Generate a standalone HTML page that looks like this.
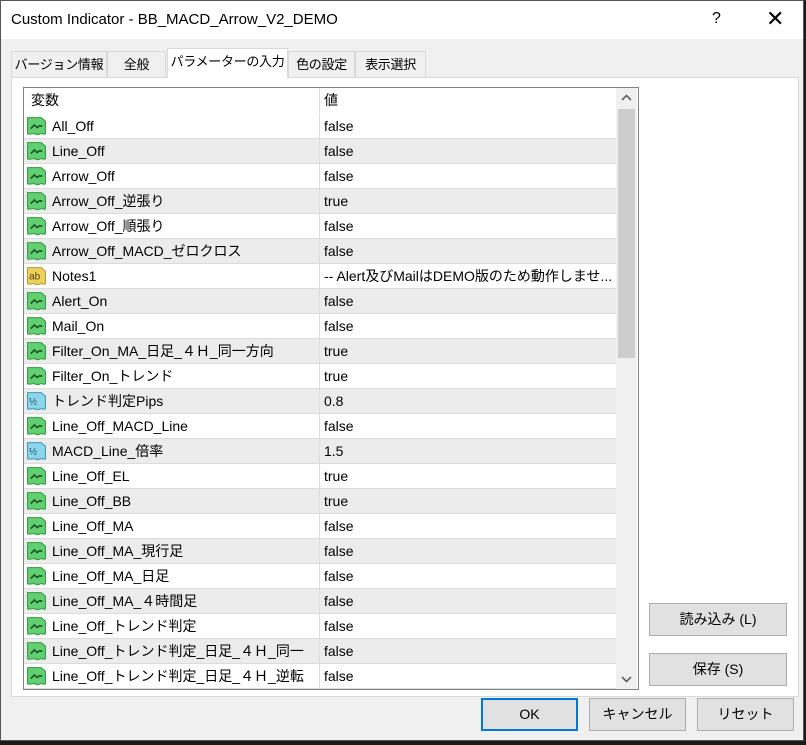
<!DOCTYPE html>
<html><head><meta charset="utf-8"><style>
*{box-sizing:border-box;margin:0;padding:0}
body{width:806px;height:745px;background:#1a1a1a;position:relative;overflow:hidden;font-family:"Liberation Sans","Noto Sans CJK JP",sans-serif;font-size:14px;color:#000}
.win{position:absolute;left:0;top:0;width:804px;height:741px;background:#f0f0f0;border:1px solid #555}
.title{position:absolute;left:0;top:0;width:802px;height:38px;background:#fff}
.title .t{position:absolute;left:10px;top:10px;font-size:15px}
.title .q{position:absolute;left:711px;top:9px;font-size:16px}
.title .x{position:absolute;left:765px;top:5px;font-size:22px;font-weight:300}
.tab{position:absolute;top:50px;height:27px;border:1px solid #d9d9d9;border-bottom:none;background:#f0f0f0;text-align:center;line-height:25px;font-size:13px;white-space:nowrap;overflow:hidden;letter-spacing:-0.3px}
.tab.a{top:47px;height:30px;background:#fff;z-index:2}
.panel{position:absolute;left:10px;top:76px;width:788px;height:620px;background:#fff;border:1px solid #d9d9d9}
.list{position:absolute;left:22px;top:86px;width:616px;height:603px;border:1px solid #828282;background:#fff;overflow:hidden}
.row{position:absolute;left:0;width:592px;height:25px;border-bottom:1px solid #dcdcdc;line-height:24px}
.row.g{background:#ececec}
.row .n{position:absolute;left:28px;white-space:nowrap}
.row .v{position:absolute;left:300px;white-space:nowrap}
.row .d{position:absolute;left:295px;top:0;width:1px;height:25px;background:#dcdcdc}
.ic{position:absolute;left:2px;top:2px;width:21px;height:20px}
.sb{position:absolute;left:592px;top:0;width:21px;height:601px;background:#f0f0f0}
.th{position:absolute;left:2px;top:21px;width:17px;height:249px;background:#cdcdcd}
.btn{position:absolute;height:33px;background:#e1e1e1;border:1px solid #adadad;text-align:center;line-height:31px;font-size:14px}
</style></head><body>
<div class="win">
<div class="title"><span class="t">Custom Indicator - BB_MACD_Arrow_V2_DEMO</span><span class="q">?</span><span class="x">✕</span></div>
<div class="tab" style="left:10px;width:96px">バージョン情報</div>
<div class="tab" style="left:106px;width:59px">全般</div>
<div class="tab a" style="left:166px;width:121px">パラメーターの入力</div>
<div class="tab" style="left:287px;width:67px">色の設定</div>
<div class="tab" style="left:354px;width:71px">表示選択</div>
<div class="panel"></div>
<div class="list" id="L">
<div class="row" style="top:0;border-bottom:none"><span class="n" style="left:7px">変数</span><span class="d"></span><span class="v">値</span></div>
<div class="sb"><svg width="21" height="20" style="position:absolute;top:0;left:0"><path d="M6 12 L10.5 7.5 L15 12" fill="none" stroke="#606060" stroke-width="1.6"/></svg><div class="th"></div><svg width="21" height="20" style="position:absolute;bottom:0;left:0"><path d="M6 8 L10.5 12.5 L15 8" fill="none" stroke="#606060" stroke-width="1.6"/></svg></div>
</div>
<div class="btn" style="left:648px;top:602px;width:138px">読み込み (L)</div>
<div class="btn" style="left:648px;top:652px;width:138px">保存 (S)</div>
<div class="btn" style="left:480px;top:697px;width:97px;border:2px solid #0078d7;line-height:29px">OK</div>
<div class="btn" style="left:588px;top:697px;width:97px">キャンセル</div>
<div class="btn" style="left:696px;top:697px;width:97px">リセット</div>
</div>
<script>
var rows=[["b","All_Off","false"],["b","Line_Off","false"],["b","Arrow_Off","false"],["b","Arrow_Off_逆張り","true"],["b","Arrow_Off_順張り","false"],["b","Arrow_Off_MACD_ゼロクロス","false"],["s","Notes1","-- Alert及びMailはDEMO版のため動作しませ..."],["b","Alert_On","false"],["b","Mail_On","false"],["b","Filter_On_MA_日足_４Ｈ_同一方向","true"],["b","Filter_On_トレンド","true"],["d","トレンド判定Pips","0.8"],["b","Line_Off_MACD_Line","false"],["d","MACD_Line_倍率","1.5"],["b","Line_Off_EL","true"],["b","Line_Off_BB","true"],["b","Line_Off_MA","false"],["b","Line_Off_MA_現行足","false"],["b","Line_Off_MA_日足","false"],["b","Line_Off_MA_４時間足","false"],["b","Line_Off_トレンド判定","false"],["b","Line_Off_トレンド判定_日足_４Ｈ_同一","false"],["b","Line_Off_トレンド判定_日足_４Ｈ_逆転","false"]];
var sh='<path d="M1.5 1.5h13l4 3.5v12c-2 1.2-3-1-5 0s-3 1-5 0-4.5 1-7 0z" ';
var icons={b:'<svg class="ic" viewBox="0 0 20 19">'+sh+'fill="#62d072" stroke="#2f9a3f"/><path d="M4.5 12l3.5-3.5 2.5 2.5 2-1.5h3" fill="none" stroke="#1d5a26" stroke-width="1.6"/></svg>',
s:'<svg class="ic" viewBox="0 0 20 19">'+sh+'fill="#ecd060" stroke="#b89a30"/><text x="3" y="13" font-size="9.5" font-family="Liberation Sans" fill="#5a4500">ab</text></svg>',
d:'<svg class="ic" viewBox="0 0 20 19">'+sh+'fill="#8dd6ea" stroke="#3a98b8"/><text x="3" y="13" font-size="9" font-family="Liberation Sans" fill="#134a5e">½</text></svg>'};
var h='';rows.forEach(function(r,i){h+='<div class="row'+(i%2?' g':'')+'" style="top:'+(26+i*25)+'px">'+icons[r[0]]+'<span class="n">'+r[1]+'</span><span class="d"></span><span class="v">'+r[2]+'</span></div>';});
document.getElementById('L').insertAdjacentHTML('afterbegin',h);
</script>
</body></html>
